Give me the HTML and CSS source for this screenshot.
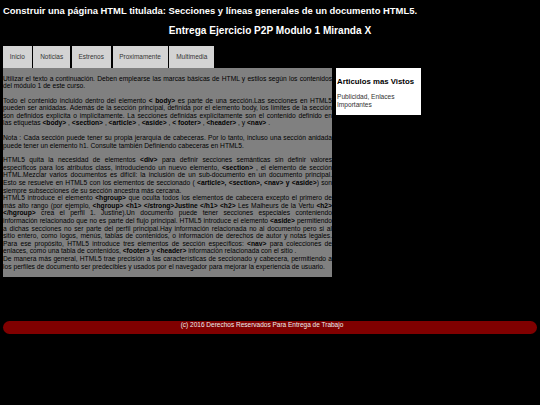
FILE: index.html
```html
<!DOCTYPE html>
<html lang="es">
<head>
    <meta charset="UTF-8">
    <title>Entrega Ejercicio P2P Modulo 1</title>
    <link rel="stylesheet" href="styles.css">
</head>
<body>
    <header class="top">
        <h2>Construir una página HTML titulada: Secciones y líneas generales de un documento HTML5.</h2>
        <h1>Entrega Ejercicio P2P Modulo 1 Miranda X</h1>
    </header>
    <nav class="tabs">
        <a href="#">Inicio</a>
        <a href="#">Noticias</a>
        <a href="#">Estrenos</a>
        <a href="#">Proximamente</a>
        <a href="#">Multimedia</a>
    </nav>
    <div class="columns">
        <section class="content">
            <p>Utilizar el texto a continuación. Deben emplearse las marcas básicas de HTML y estilos según los contenidos del módulo 1 de este curso.</p>
            <p>Todo el contenido incluido dentro del elemento <b>&lt; body&gt;</b> es parte de una sección.Las secciones en HTML5 pueden ser anidadas. Además de la sección principal, definida por el elemento body, los límites de la sección son definidos explícita o implícitamente. La secciones definidas explícitamente son el contenido definido en <span class="keep">las etiquetas</span> <b>&lt;body&gt;</b> , <b>&lt;section&gt;</b> , <b>&lt;article&gt;</b> , <b>&lt;aside&gt;</b> , <b>&lt; footer&gt;</b> , <b>&lt;header&gt;</b> , y <b>&lt;nav&gt;</b> .</p>
            <p>Nota : Cada sección puede tener su propia jerarquía de cabeceras. Por lo tanto, incluso una sección anidada puede tener un elemento h1. Consulte también Definiendo cabeceras en HTML5.</p>
            <p>HTML5 quita la necesidad de elementos <b>&lt;div&gt;</b> para definir secciones semánticas sin definir valores específicos para los atributos class, introduciendo un nuevo elemento, <b>&lt;section&gt;</b> , el elemento de sección HTML.Mezclar varios documentos es difícil: la inclusión de un sub-documento en un documento principal. <span class="keep">Esto se resuelve</span> en HTML5 con los elementos de seccionado ( <b>&lt;article&gt;, &lt;section&gt;, &lt;nav&gt; y &lt;aside&gt;</b>) son siempre subsecciones de su sección ancestra más cercana.<br>
            HTML5 introduce el elemento <b>&lt;hgroup&gt;</b> que oculta todos los elementos de cabecera excepto el primero de más alto rango (por ejemplo, <b>&lt;hgroup&gt; &lt;h1&gt; &lt;/strong&gt;Justine &lt;/h1&gt; &lt;h2&gt;</b> Les Malheurs de la Vertu <b>&lt;h2&gt; &lt;/hgroup&gt;</b> crea el perfil 1. Justine).Un documento puede tener secciones especiales conteniendo <span class="keep">información relacionado que no es parte</span> del flujo principal. HTML5 introduce el elemento <b>&lt;aside&gt;</b> permitiendo <span class="keep">a dichas secciones</span> no ser parte del perfil principal.Hay información relacionada no al documento pero si al <span class="keep">sitio entero, como logos, menús, tablas</span> de contenidos, o información de derechos de autor y notas legales. <span class="keep">Para ese propósito, HTML5 introduce</span> tres elementos de sección específicos: <b>&lt;nav&gt;</b> para colecciones de <span class="keep">enlaces, como una tabla de contenidos,</span> <b>&lt;footer&gt;</b> y <b>&lt;header&gt;</b> información relacionada con el sitio .<br>
            De manera más general, HTML5 trae precisión a las características de seccionado y cabecera, permitiendo a los perfiles de documento ser predecibles y usados por el navegador para mejorar la experiencia de usuario.</p>
        </section>
        <aside class="side">
            <h3>Articulos mas Vistos</h3>
            <p>Publicidad, Enlaces Importantes</p>
        </aside>
    </div>
    <footer class="bottom">(c) 2016 Derechos Reservados Para Entrega de Trabajo</footer>
</body>
</html>
```

FILE: styles.css
```css
* {
    margin: 0;
    padding: 0;
    box-sizing: border-box;
    font-family: "Liberation Sans", Arial, sans-serif;
}

body {
    background: #000;
    color: #000;
    padding: 0 3px;
}

.top {
    color: #fff;
    height: 46px;
    padding-top: 5px;
}

.top h2 {
    font-size: 9.45px;
    line-height: 12px;
}

.top h1 {
    font-size: 10.1px;
    line-height: 12px;
    margin-top: 8px;
    text-align: center;
}

.tabs {
    display: flex;
    gap: 1.8px;
    height: 22px;
}

.tabs a {
    background: #d3d3d3;
    color: #333;
    font-size: 6.45px;
    line-height: 21px;
    padding: 0 6.8px;
    text-decoration: none;
}

.columns {
    display: flex;
    align-items: flex-start;
    gap: 4px;
}

.content {
    background: #808080;
    font-size: 6.7px;
    height: 209px;
    line-height: 7.6px;
    padding-top: 6.5px;
    text-align: justify;
    width: 329px;
}

.content p {
    margin-bottom: 7px;
}

.keep {
    white-space: nowrap;
}

.side {
    background: #fff;
    height: 47px;
    padding: 9px 1px 0;
    width: 85px;
}

.side h3 {
    font-size: 7.8px;
    line-height: 9px;
    margin-bottom: 7px;
}

.side p {
    color: #333;
    font-size: 6.6px;
    line-height: 7.8px;
}

.bottom {
    background: #800000;
    border-radius: 7px;
    color: #eee;
    font-size: 6.5px;
    height: 13px;
    line-height: 8px;
    margin-top: 44px;
    padding-right: 16px;
    text-align: center;
}
```
